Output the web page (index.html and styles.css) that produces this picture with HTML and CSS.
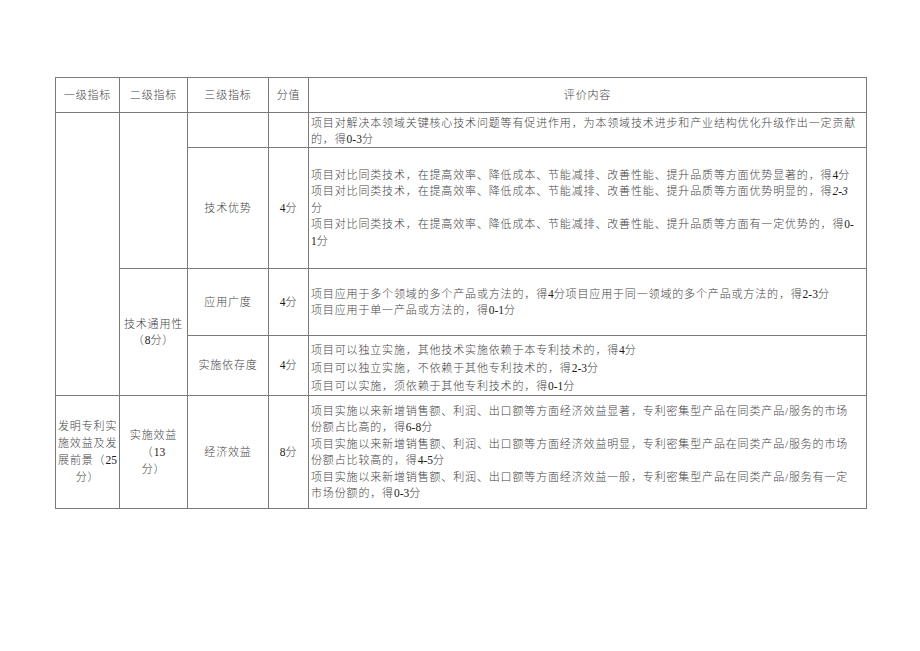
FILE: index.html
```html
<!DOCTYPE html>
<html lang="zh-CN">
<head>
<meta charset="utf-8">
<title>评价指标</title>
<link rel="stylesheet" href="styles.css">
</head>
<body>
<div class="page">
  <table class="grid">
    <colgroup>
      <col class="c1"><col class="c2"><col class="c3"><col class="c4"><col class="c5">
    </colgroup>
    <tr class="r-head">
      <th>一级指标</th>
      <th>二级指标</th>
      <th>三级指标</th>
      <th>分值</th>
      <th>评价内容</th>
    </tr>
    <tr class="r1">
      <td class="mid" rowspan="4"></td>
      <td class="mid" rowspan="2"></td>
      <td class="mid"></td>
      <td class="mid"></td>
      <td class="txt">项目对解决本领域关键核心技术问题等有促进作用，为本领域技术进步和产业结构优化升级作出一定贡献<br>的，得<span class="num">0-3</span>分</td>
    </tr>
    <tr class="r2">
      <td class="mid">技术优势</td>
      <td class="mid"><span class="num">4</span>分</td>
      <td class="txt">项目对比同类技术，在提高效率、降低成本、节能减排、改善性能、提升品质等方面优势显著的，得<span class="num">4</span>分<br>项目对比同类技术，在提高效率、降低成本、节能减排、改善性能、提升品质等方面优势明显的，得<span class="num it">2-3</span><br>分<br>项目对比同类技术，在提高效率、降低成本、节能减排、改善性能、提升品质等方面有一定优势的，得<span class="num">0-</span><br><span class="num">1</span>分</td>
    </tr>
    <tr class="r3">
      <td class="mid" rowspan="2">技术通用性<br>（<span class="num">8</span>分）</td>
      <td class="mid">应用广度</td>
      <td class="mid"><span class="num">4</span>分</td>
      <td class="txt">项目应用于多个领域的多个产品或方法的，得<span class="num">4</span>分项目应用于同一领域的多个产品或方法的，得<span class="num">2-3</span>分<br>项目应用于单一产品或方法的，得<span class="num">0-1</span>分</td>
    </tr>
    <tr class="r4">
      <td class="mid">实施依存度</td>
      <td class="mid"><span class="num">4</span>分</td>
      <td class="txt">项目可以独立实施，其他技术实施依赖于本专利技术的，得<span class="num">4</span>分<br>项目可以独立实施，不依赖于其他专利技术的，得<span class="num">2-3</span>分<br>项目可以实施，须依赖于其他专利技术的，得<span class="num">0-1</span>分</td>
    </tr>
    <tr class="r5">
      <td class="mid">发明专利实<br>施效益及发<br>展前景（<span class="num">25</span><br>分）</td>
      <td class="mid">实施效益<br>（<span class="num">13</span><br>分）</td>
      <td class="mid">经济效益</td>
      <td class="mid"><span class="num">8</span>分</td>
      <td class="txt">项目实施以来新增销售额、利润、出口额等方面经济效益显著，专利密集型产品在同类产品/服务的市场<br>份额占比高的，得<span class="num">6-8</span>分<br>项目实施以来新增销售额、利润、出口额等方面经济效益明显，专利密集型产品在同类产品/服务的市场<br>份额占比较高的，得<span class="num">4-5</span>分<br>项目实施以来新增销售额、利润、出口额等方面经济效益一般，专利密集型产品在同类产品/服务有一定<br>市场份额的，得<span class="num">0-3</span>分</td>
    </tr>
  </table>
</div>
</body>
</html>
```

FILE: styles.css
```css
html, body {
  margin: 0;
  padding: 0;
  background: #ffffff;
}

.page {
  padding: 77px 0 0 55px;
  font-family: "Liberation Serif", "Noto Sans CJK SC", serif;
  font-size: 11px;
  font-weight: 300;
  color: #444444;
}

.grid {
  border-collapse: collapse;
  table-layout: fixed;
  width: 811px;
}

.c1 { width: 64px; }
.c2 { width: 68px; }
.c3 { width: 81px; }
.c4 { width: 40px; }
.c5 { width: 558px; }

.grid th,
.grid td {
  border: 1px solid #7a7a7a;
  padding: 0 2px;
  line-height: 16.5px;
  letter-spacing: 0.85px;
  vertical-align: middle;
  overflow: visible;
}

.grid th {
  font-weight: 300;
  text-align: center;
}

.mid {
  text-align: center;
  white-space: nowrap;
}

.txt {
  text-align: left;
  white-space: nowrap;
  letter-spacing: 0.62px;
}

.num {
  font-family: "Liberation Serif", serif;
  font-size: 11.5px;
  font-weight: normal;
  letter-spacing: 0;
  color: #1a1a1a;
}

.it {
  font-style: italic;
}

.r-head { height: 35px; }
.r1 { height: 35px; }
.r2 { height: 121px; }
.r3 { height: 67px; }
.r4 { height: 60px; }
.r5 { height: 113px; }

.r1 .txt { line-height: 15.5px; vertical-align: bottom; }
.r4 .txt { line-height: 18px; padding-top: 5px; }
.r5 .mid { line-height: 17px; }
```
